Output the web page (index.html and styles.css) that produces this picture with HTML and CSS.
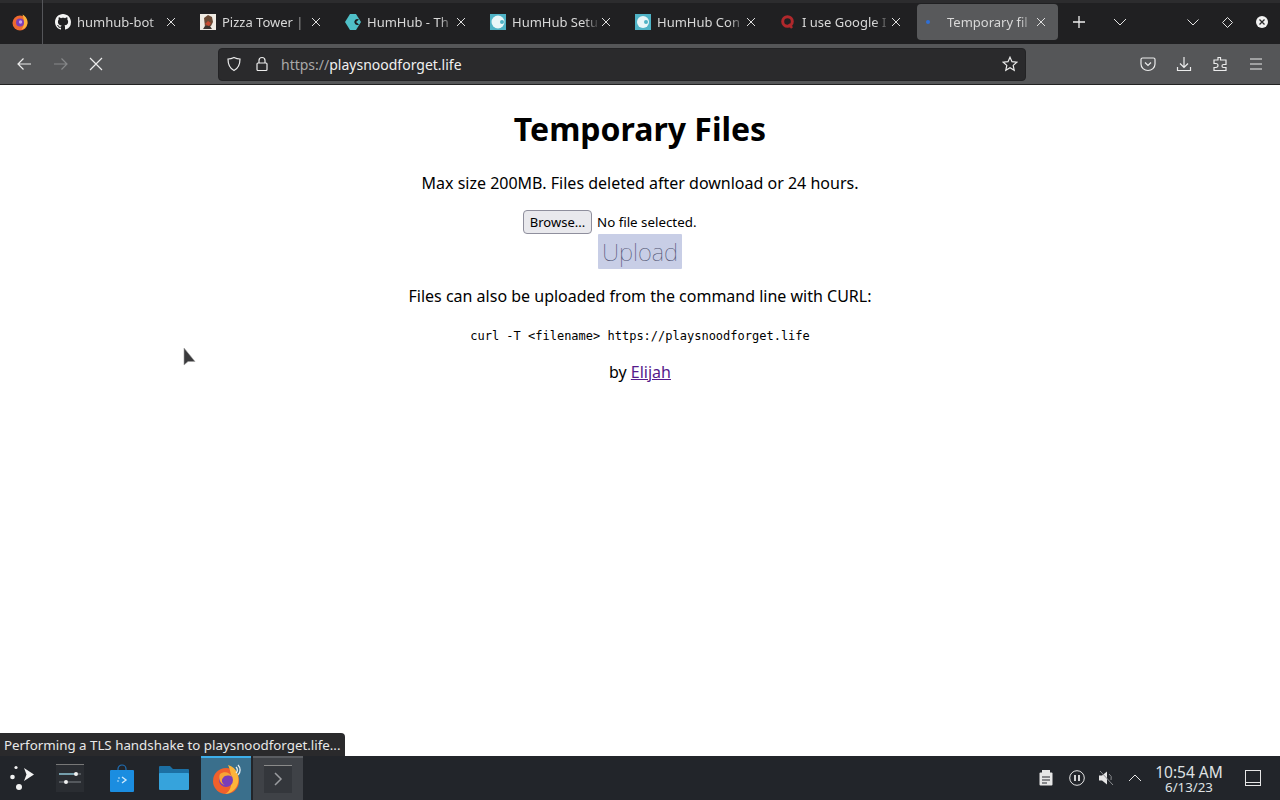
FILE: index.html
```html
<!DOCTYPE html>
<html lang="en">
<head>
<meta charset="utf-8">
<title>Temporary Files</title>
<link rel="stylesheet" href="styles.css">
</head>
<body>
<div class="screen">
  <header class="tabbar">
    <div class="fxmenu">
      <svg width="18" height="18" viewBox="0 0 18 18"><circle cx="9" cy="10" r="7.500" fill="#ee6a30"/><path d="M11.500 1.500c3.500 1.800 5.800 5.500 4.800 9.500-.8 3-3 5-6 5.500 3-2.500 3.500-8 1.200-15z" fill="#fcb23a"/><circle cx="9" cy="9.500" r="4" fill="#7b3fb8"/><circle cx="9.500" cy="9" r="1.700" fill="#c9a0e8"/></svg>
    </div>
    <div class="tabs">
      <div class="tab">
        <svg class="fav" width="16" height="16" viewBox="0 0 16 16"><path fill="#f4f4f4" fill-rule="evenodd" d="M8 0C3.580 0 0 3.580 0 8c0 3.540 2.290 6.530 5.470 7.590.4.070.55-.17.55-.38 0-.19-.01-.82-.01-1.490-2.010.37-2.530-.49-2.690-.94-.09-.23-.48-.94-.82-1.130-.28-.15-.68-.52-.01-.53.630-.01 1.080.58 1.230.82.720 1.210 1.870.87 2.330.66.070-.52.280-.87.510-1.070-1.780-.2-3.640-.89-3.640-3.950 0-.87.310-1.590.820-2.150-.08-.2-.36-1.020.08-2.120 0 0 .67-.21 2.200.82.640-.18 1.320-.27 2-.27s1.360.09 2 .27c1.530-1.040 2.200-.82 2.200-.82.440 1.100.160 1.920.08 2.120.510.560.820 1.270.820 2.150 0 3.070-1.870 3.750-3.650 3.950.290.250.540.730.540 1.480 0 1.070-.01 1.930-.01 2.200 0 .21.150.46.550.38A8.010 8.010 0 0 0 16 8c0-4.420-3.580-8-8-8z"/></svg>
        <span class="tab-title">humhub-bot</span>
        <svg class="x" width="10" height="10" viewBox="0 0 10 10"><path d="M1 1l8 8M9 1l-8 8"/></svg>
      </div>
      <div class="tab">
        <svg class="fav" width="16" height="16" viewBox="0 0 16 16"><rect width="16" height="16" fill="#f0ece4"/><path d="M4 4l4-3 4 2 1 5-2 4-6 1z" fill="#6b4a35"/><path d="M5 10l3-3 3 2-2 3z" fill="#c94a30"/><path d="M3 15l2-3h5l2 3z" fill="#3c3430"/></svg>
        <span class="tab-title">Pizza Tower |</span>
        <svg class="x" width="10" height="10" viewBox="0 0 10 10"><path d="M1 1l8 8M9 1l-8 8"/></svg>
      </div>
      <div class="tab">
        <svg class="fav" width="16" height="16" viewBox="0 0 16 16"><path d="M5 0h6l5 8-5 8H5L0 8z" fill="#4fc0c8"/><path d="M14 5.500A3 3 0 1 0 14 10.500L11 8z" fill="#1f2022"/></svg>
        <span class="tab-title">HumHub - Th</span>
        <svg class="x" width="10" height="10" viewBox="0 0 10 10"><path d="M1 1l8 8M9 1l-8 8"/></svg>
      </div>
      <div class="tab">
        <svg class="fav" width="16" height="16" viewBox="0 0 16 16"><rect width="16" height="16" fill="#4fb3c6"/><circle cx="8" cy="8" r="6.500" fill="#e8f6f8"/><circle cx="12" cy="8" r="2" fill="#4fb3c6"/></svg>
        <span class="tab-title">HumHub Setu</span>
        <svg class="x" width="10" height="10" viewBox="0 0 10 10"><path d="M1 1l8 8M9 1l-8 8"/></svg>
      </div>
      <div class="tab">
        <svg class="fav" width="16" height="16" viewBox="0 0 16 16"><rect width="16" height="16" fill="#4fb3c6"/><circle cx="8" cy="8" r="6" fill="#e8f6f8"/><circle cx="11" cy="8" r="2" fill="#4fb3c6"/></svg>
        <span class="tab-title">HumHub Con</span>
        <svg class="x" width="10" height="10" viewBox="0 0 10 10"><path d="M1 1l8 8M9 1l-8 8"/></svg>
      </div>
      <div class="tab">
        <svg class="fav" width="16" height="16" viewBox="0 0 16 16"><circle cx="7.500" cy="7.500" r="4.800" fill="none" stroke="#b0282c" stroke-width="3"/><path d="M9 10l3 4" stroke="#b0282c" stroke-width="2.500"/></svg>
        <span class="tab-title">I use Google I</span>
        <svg class="x" width="10" height="10" viewBox="0 0 10 10"><path d="M1 1l8 8M9 1l-8 8"/></svg>
      </div>
      <div class="tab active">
        <svg class="fav" width="16" height="16" viewBox="0 0 16 16"><circle cx="2" cy="8" r="2" fill="#2f6fd6"/></svg>
        <span class="tab-title">Temporary fil</span>
        <svg class="x" width="10" height="10" viewBox="0 0 10 10"><path d="M1 1l8 8M9 1l-8 8"/></svg>
      </div>
    </div>
    <svg class="newtab" width="14" height="14" viewBox="0 0 14 14"><path d="M7 1v12M1 7h12"/></svg>
    <svg class="chev list" width="14" height="8" viewBox="0 0 14 8"><path d="M1 1l6 6 6-6"/></svg>
    <div class="winctl">
      <svg class="chev" width="12" height="7" viewBox="0 0 12 7"><path d="M.5.500L6 6 11.500.500"/></svg>
      <svg class="chev" width="11" height="11" viewBox="0 0 11 11"><path d="M5.500.500l5 5-5 5-5-5z"/></svg>
      <svg width="12" height="12" viewBox="0 0 12 12"><circle cx="6" cy="6" r="6" fill="#f2f2f2"/><path d="M3.500 3.500l5 5M8.500 3.500l-5 5" stroke="#2a2a2c" stroke-width="1.300"/></svg>
    </div>
  </header>

  <nav class="toolbar">
    <div class="navbtns">
      <svg class="ic" width="16" height="16" viewBox="0 0 16 16"><path d="M15 8H2M7.500 2.500L2 8l5.500 5.500"/></svg>
      <svg class="ic off" width="16" height="16" viewBox="0 0 16 16"><path d="M1 8h13M8.500 2.500L14 8l-5.500 5.500"/></svg>
      <svg class="ic stop" width="14" height="14" viewBox="0 0 14 14"><path d="M1 1l12 12M13 1L1 13"/></svg>
    </div>
    <div class="urlbar">
      <svg class="ic" width="16" height="16" viewBox="0 0 16 16"><path d="M8 1.500c2 1 4 1.500 6 1.500 0 5-1 9-6 11.500C3 12 2 8 2 3c2 0 4-.5 6-1.500z"/></svg>
      <svg class="ic" width="14" height="16" viewBox="0 0 14 16"><rect x="2" y="7" width="10" height="7.500" rx="1"/><path d="M4 7V4.500a3 3 0 0 1 6 0V7"/></svg>
      <span class="url"><span class="scheme">https://</span>playsnoodforget.life</span>
      <svg class="ic star" width="16" height="16" viewBox="0 0 16 16"><path d="M8 1.200l2 4.500 4.800.5-3.600 3.200 1 4.800L8 11.800l-4.200 2.400 1-4.800L1.200 6.200 6 5.700z"/></svg>
    </div>
    <div class="tools">
      <svg class="ic" width="16" height="16" viewBox="0 0 16 16"><path d="M2.500 2h11a1.500 1.500 0 0 1 1.500 1.500V8a7 6.500 0 0 1-14 0V3.500A1.500 1.500 0 0 1 2.500 2z"/><path d="M5 6.500l3 3 3-3"/></svg>
      <svg class="ic" width="16" height="16" viewBox="0 0 16 16"><path d="M8 1v10M4 7.500L8 11.500l4-4M1.500 11v3.500h13V11"/></svg>
      <svg class="ic" width="16" height="16" viewBox="0 0 16 16"><path d="M6 1.500h2.500v2.500H14v4.500h-2.500a1.500 1.500 0 0 0 0 3H14v3H2v-3h2a2 2 0 0 0 0-4H2V4h4z"/></svg>
      <svg class="ic" width="16" height="14" viewBox="0 0 16 14"><path d="M2 2h12M2 7h12M2 12h12"/></svg>
    </div>
  </nav>

  <main class="page">
    <h1>Temporary Files</h1>
    <p class="lead">Max size 200MB. Files deleted after download or 24 hours.</p>
    <form class="upload">
      <div class="filerow"><button type="button" class="browse">Browse...</button><span class="nofile">No file selected.</span></div>
      <button type="button" class="submit">Upload</button>
    </form>
    <p class="cli">Files can also be uploaded from the command line with CURL:</p>
    <code class="cmd">curl -T &lt;filename&gt; https://playsnoodforget.life</code>
    <p class="by">by <a href="#">Elijah</a></p>
    <svg class="cursor" width="13" height="22" viewBox="0 0 13 22"><path d="M1 1v17l4-3.500h7z" fill="#3a3a3c" stroke="#a0a0a0" stroke-width=".6"/></svg>
    <div class="status">Performing a TLS handshake to playsnoodforget.life...</div>
  </main>

  <footer class="taskbar">
    <div class="launchers">
      <div class="tb-item first">
        <svg width="28" height="28" viewBox="0 0 28 28"><path d="M16 4l10 6.500-10 6.500 2.500-6.500z" fill="#f2f2f2"/><circle cx="8" cy="3.500" r="1.600" fill="#f2f2f2"/><circle cx="4.500" cy="13" r="2.300" fill="#f2f2f2"/><circle cx="11" cy="23" r="3" fill="#f2f2f2"/></svg>
      </div>
      <div class="tb-item">
        <svg width="28" height="28" viewBox="0 0 28 28"><rect width="28" height="28" fill="#2a2d32"/><rect width="28" height="1" fill="#777"/><path d="M3 10h17" stroke="#8fc4d6" stroke-width="1.500"/><path d="M22 10h3M3 18h7M12 18h13" stroke="#7e8388" stroke-width="1.200"/><circle cx="20" cy="10" r="2" fill="#f2f2f2"/><circle cx="10" cy="18" r="2" fill="#f2f2f2"/></svg>
      </div>
      <div class="tb-item">
        <svg width="26" height="28" viewBox="0 0 26 28"><path d="M9 9V5a4 4 0 0 1 8 0v4" fill="none" stroke="#1f6fb5" stroke-width="1.200"/><rect x="1" y="6" width="24" height="22" rx="1" fill="#1b8de0"/><path d="M13 13l4 3-4 3" stroke="#cfe9fb" stroke-width="1.400" fill="none"/><circle cx="10" cy="14" r=".8" fill="#cfe9fb"/><circle cx="9" cy="17" r=".8" fill="#cfe9fb"/></svg>
      </div>
      <div class="tb-item folder">
        <svg width="30" height="26" viewBox="0 0 30 26"><path d="M0 2a1 1 0 0 1 1-1h10l3 3h15a1 1 0 0 1 1 1v4H0z" fill="#1c6fa3"/><rect y="8" width="30" height="17" rx="1" fill="#36a3dc"/></svg>
      </div>
      <div class="tb-item current">
        <svg width="36" height="36" viewBox="-3 0 36 36"><circle cx="15" cy="20" r="13" fill="#f0602c"/><path d="M17 4c9 2 13 13 9 21-2 4-7 8-12 8 8-3 8-18 3-29z" fill="#fcb43a"/><circle cx="15" cy="19" r="7" fill="#7a3db8"/><path d="M9 13c4-3 10-2 12 3-3-2-7-2-9 1-2 2-1 6 2 7-5-1-7-7-5-11z" fill="#f7a535"/><path d="M27 4a7 7 0 0 1 0 10M25 6a4 4 0 0 1 0 6" stroke="#e6eef2" stroke-width="1.300" fill="none"/></svg>
      </div>
      <div class="tb-item task">
        <svg width="28" height="28" viewBox="0 0 28 28"><rect width="28" height="28" fill="#34373c"/><rect width="28" height="1" fill="#8a8a8a"/><path d="M11 8l6 6-6 6" fill="none" stroke="#9a9ca0" stroke-width="1.500"/></svg>
      </div>
    </div>
    <div class="tray">
      <svg class="ti" width="14" height="16" viewBox="0 0 14 16"><rect x=".5" y="2.500" width="13" height="13" rx="1" fill="#e6e6e6"/><rect x="3" width="8" height="4" fill="#e6e6e6"/><path d="M3 7h8M3 10h8M3 13h5" stroke="#26292e"/></svg>
      <svg class="ti pause" width="16" height="16" viewBox="0 0 16 16"><circle cx="8" cy="8" r="7.300" fill="none" stroke="#e6e6e6"/><path d="M6 5v6M10 5v6" stroke="#e6e6e6" stroke-width="1.800"/></svg>
      <svg class="ti" width="17" height="16" viewBox="0 0 17 16"><path d="M1 5.500h3L9 1.500v13L4 10.500H1z" fill="#e6e6e6"/><path d="M11 4a5 5 0 0 1 2 6M2 1l13 14" stroke="#8b8d90" fill="none"/></svg>
      <svg class="ti up" width="14" height="8" viewBox="0 0 14 8"><path d="M1 7l6-6 6 6" fill="none" stroke="#e6e6e6"/></svg>
      <div class="clock"><span class="time">10:54 AM</span><span class="date">6/13/23</span></div>
      <svg class="ti desk" width="16" height="16" viewBox="0 0 16 16"><rect x=".5" y=".5" width="15" height="15" fill="none" stroke="#e6e6e6"/><path d="M.5 12.500h15" stroke="#e6e6e6"/></svg>
    </div>
  </footer>
</div>
</body>
</html>
```
FILE: styles.css
```css
* { box-sizing: border-box; }
html, body { margin: 0; padding: 0; }
body { width: 1280px; height: 800px; overflow: hidden; font-family: "Noto Sans", sans-serif; background: #fff; }
.screen { display: flex; flex-direction: column; width: 1280px; height: 800px; }
svg { display: block; flex: none; }

.tabbar { height: 44px; flex: none; display: flex; align-items: center; padding: 2px 0 2px; background: #202022; color: #dcdcdc; box-shadow: inset 0 3px 0 #2c2c2e; }
.fxmenu { width: 43px; height: 44px; margin: -2px 0; display: flex; align-items: center; padding-left: 11px; border-right: 1px solid #55565a; }
.tabs { display: flex; align-items: center; padding-left: 3px; }
.tab { width: 145px; height: 36px; display: flex; align-items: center; padding-left: 9px; border-radius: 4px; font-size: 13px; }
.tab .fav { margin-right: 6px; }
.tab-title { width: 88px; white-space: nowrap; color: #d8d8d8; -webkit-mask-image: linear-gradient(to right, #000 82%, transparent); mask-image: linear-gradient(to right, #000 82%, transparent); }
.tab .x { fill: none; stroke: #dedede; stroke-width: 1; margin-left: 1px; }
.tab.active { width: 141px; background: #58595b; margin-left: 1px; }
.tab.active .fav { margin-right: 5px; }
.newtab { fill: none; stroke: #eee; stroke-width: 1.300; margin-left: 14px; }
.chev { fill: none; stroke: #e4e4e4; stroke-width: 1; }
.list { margin-left: 27px; }
.winctl { margin-left: auto; display: flex; align-items: center; gap: 23px; padding-right: 12px; }

.toolbar { height: 41px; flex: none; display: flex; align-items: center; background: #555658; border-bottom: 1px solid #222; }
.ic { fill: none; stroke: #ececec; stroke-width: 1.200; }
.ic.off { stroke: #87888a; }
.navbtns { width: 218px; display: flex; align-items: center; gap: 21px; padding-left: 16px; }
.navbtns .stop { margin-left: -1px; }
.urlbar { width: 808px; height: 33px; display: flex; align-items: center; background: #2a2a2c; border: 1px solid #232325; border-radius: 4px; padding-left: 7px; font-size: 14px; color: #f0f0f0; }
.urlbar .ic:nth-child(2) { margin-left: 13px; }
.url { margin-left: 12px; }
.scheme { color: #a8a8a8; }
.star { margin-left: auto; margin-right: 7px; }
.tools { display: flex; align-items: center; gap: 20px; margin-left: 114px; }

.page { flex: 1; position: relative; background: #fff; color: #000; text-align: center; display: flex; flex-direction: column; align-items: center; font-size: 16px; }
h1 { margin: 22px 0 0; font-size: 32px; line-height: 44px; font-weight: 700; }
.lead { margin: 21px 0 0; line-height: 22px; }
.upload { margin: 16px 0 0; display: flex; flex-direction: column; align-items: center; width: 100%; }
.filerow { display: flex; align-items: center; width: 234px; height: 24px; }
.browse { width: 69px; height: 24px; padding: 0; font: 13px "Noto Sans", sans-serif; color: #000; background: #e9e9ed; border: 1px solid #8f8f9d; border-radius: 4px; }
.nofile { font-size: 13.330px; margin-left: 5px; white-space: nowrap; }
.submit { width: 84px; height: 35px; padding: 0; border: 0; border-radius: 1px; background: #c8cee6; color: #4d5170; font: 100 24px "Noto Sans", sans-serif; }
.cli { margin: 16px 0 0; line-height: 22px; }
.cmd { margin-top: 21px; font: 12px/16px "DejaVu Sans Mono", monospace; }
.by { margin: 17px 0 0; line-height: 22px; }
.by a { color: #551a8b; }
.cursor { position: absolute; left: 183px; top: 262px; }
.status { position: absolute; left: 0; bottom: 0; height: 23px; width: 345px; padding: 0 4px; line-height: 24px; font-size: 13.330px; text-align: left; color: #e8e8e8; background: #2a2a2c; border-top-right-radius: 4px; white-space: nowrap; }

.taskbar { height: 44px; flex: none; display: flex; align-items: center; justify-content: space-between; background: #22252a; }
.launchers { display: flex; align-items: center; height: 100%; }
.tb-item { width: 52px; height: 44px; display: flex; align-items: center; justify-content: center; }
.tb-item.first { width: 44px; }
.tb-item.folder { margin-right: 1px; }
.tb-item.current { width: 50px; margin-right: 2px; background: #3a6f8c; border-top: 2px solid #3daee9; }
.tb-item.task { width: 50px; background: #3f4247; border-top: 2px solid #5a5d62; }
.tray { display: flex; align-items: center; height: 100%; padding-right: 19px; }
.ti { margin-left: 13px; }
.ti.pause { margin-left: 16px; }
.ti.up { margin-left: 13px; }
.ti.desk { margin-left: 21px; }
.clock { display: flex; flex-direction: column; align-items: center; width: 70px; margin-left: 12px; padding-top: 1px; color: #dfe1e3; }
.time { font-size: 15.500px; line-height: 16px; }
.date { font-size: 13.300px; line-height: 14px; }
```
